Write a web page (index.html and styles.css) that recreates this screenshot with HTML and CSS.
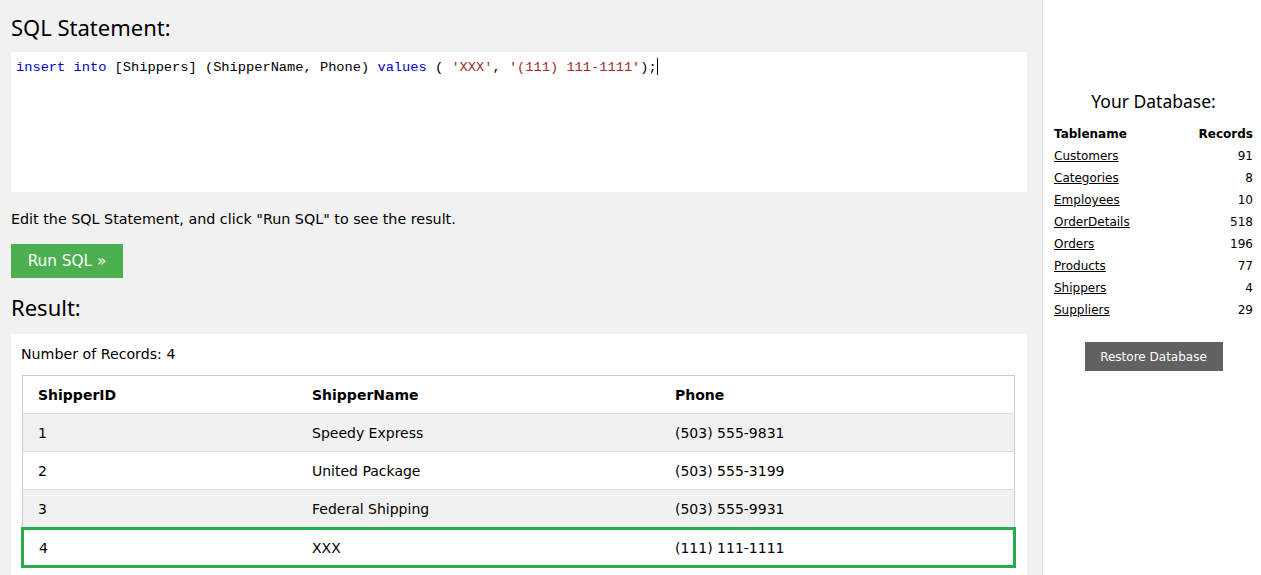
FILE: index.html
```html
<!DOCTYPE html>
<html>
<head>
<meta charset="utf-8">
<title>SQL Tryit</title>
<link rel="stylesheet" href="styles.css">
</head>
<body>
<div class="page">
  <main class="main">
    <h2 class="heading">SQL Statement:</h2>
    <div class="code"><span class="kw">insert</span> <span class="kw">into</span> [Shippers] (ShipperName, Phone) <span class="kw">values</span> ( <span class="str">'XXX'</span>, <span class="str">'(111) 111-1111'</span>);<span class="caret"></span></div>
    <p class="hint">Edit the SQL Statement, and click "Run SQL" to see the result.</p>
    <button class="run">Run SQL »</button>
    <h2 class="heading result-heading">Result:</h2>
    <div class="result">
      <div class="count">Number of Records: 4</div>
      <table class="grid">
        <thead>
          <tr><th class="c1">ShipperID</th><th class="c2">ShipperName</th><th>Phone</th></tr>
        </thead>
        <tbody>
          <tr class="alt"><td>1</td><td>Speedy Express</td><td>(503) 555-9831</td></tr>
          <tr><td>2</td><td>United Package</td><td>(503) 555-3199</td></tr>
          <tr class="alt"><td>3</td><td>Federal Shipping</td><td>(503) 555-9931</td></tr>
          <tr class="new"><td>4</td><td>XXX</td><td>(111) 111-1111</td></tr>
        </tbody>
      </table>
    </div>
  </main>
  <aside class="side">
    <h3 class="side-title">Your Database:</h3>
    <table class="db">
      <thead><tr><th class="tn">Tablename</th><th class="rc">Records</th></tr></thead>
      <tbody>
        <tr><td><a href="#">Customers</a></td><td class="rc">91</td></tr>
        <tr><td><a href="#">Categories</a></td><td class="rc">8</td></tr>
        <tr><td><a href="#">Employees</a></td><td class="rc">10</td></tr>
        <tr><td><a href="#">OrderDetails</a></td><td class="rc">518</td></tr>
        <tr><td><a href="#">Orders</a></td><td class="rc">196</td></tr>
        <tr><td><a href="#">Products</a></td><td class="rc">77</td></tr>
        <tr><td><a href="#">Shippers</a></td><td class="rc">4</td></tr>
        <tr><td><a href="#">Suppliers</a></td><td class="rc">29</td></tr>
      </tbody>
    </table>
    <div class="restore-wrap"><button class="restore">Restore Database</button></div>
  </aside>
</div>
</body>
</html>
```
FILE: styles.css
```css
html, body {
  margin: 0;
  padding: 0;
  height: 100%;
  overflow: hidden;
}
body {
  font-family: "DejaVu Sans", Verdana, sans-serif;
  color: #000;
  background: #fff;
}
.page {
  display: flex;
  height: 575px;
}
.main {
  width: 1016px;
  flex: none;
  display: flex;
  flex-direction: column;
  background: #f1f1f1;
  padding: 0 15px 0 11px;
  border-right: 1px solid #e2e2e2;
  overflow: hidden;
}
.heading {
  font-family: "Noto Sans", "Open Sans", sans-serif;
  font-weight: 400;
  font-size: 22px;
  line-height: 30px;
  margin: 12px 0 10px 0;
  color: #000;
}
.code {
  flex: none;
  background: #fff;
  height: 140px;
  box-sizing: border-box;
  padding: 6px 5px;
  font-family: "Liberation Mono", "DejaVu Sans Mono", monospace;
  font-size: 13.7px;
  line-height: 18px;
  color: #000;
  white-space: pre;
}
.kw { color: #0000cd; }
.str { color: #a52a2a; }
.caret {
  display: inline-block;
  width: 1px;
  height: 17px;
  background: #000;
  vertical-align: -4px;
}
.hint {
  font-size: 14.3px;
  line-height: 20px;
  margin: 17px 0 15px 0;
}
.run {
  display: block;
  flex: none;
  background: #4caf50;
  color: #fff;
  border: none;
  font-family: "DejaVu Sans", Verdana, sans-serif;
  font-size: 15.3px;
  height: 34px;
  width: 112px;
  padding: 0;
  margin: 0;
}
.result-heading {
  margin: 14px 0 12px 0;
}
.result {
  flex: 1;
  min-height: 0;
  background: #fff;
  padding: 10px 11px 0 10px;
}
.count {
  font-size: 14.2px;
  line-height: 20px;
  margin-bottom: 11px;
}
.grid {
  width: 995px;
  border-collapse: collapse;
  border: 1px solid #ccc;
  font-size: 14px;
}
.grid th, .grid td {
  text-align: left;
  padding: 0 16px 0 15px;
  height: 37px;
  border-bottom: 1px solid #ddd;
}
.grid th { font-weight: bold; }
.grid .c1 { width: 243px; }
.grid .c2 { width: 332px; }
.grid tr.alt td { background: #f1f1f1; }
.grid tr.new td {
  border-top: 3px solid #2bab4f;
  border-bottom: 3px solid #2bab4f;
  height: 35px;
}
.grid tr.new td:first-child { border-left: 3px solid #2bab4f; }
.grid tr.new td:last-child { border-right: 3px solid #2bab4f; }
.side {
  flex: 1;
  padding: 0 8px 0 11px;
}
.side-title {
  font-family: "Noto Sans", "Open Sans", sans-serif;
  font-weight: 400;
  font-size: 17.5px;
  text-align: center;
  margin: 89px 0 10px 0;
  line-height: 24px;
  color: #000;
}
.db {
  width: 100%;
  border-collapse: collapse;
  font-size: 12px;
}
.db th, .db td {
  height: 22px;
  padding: 0;
  text-align: left;
}
.db .rc { text-align: right; }
.db a { color: #000; text-decoration: underline; }
.restore-wrap {
  display: flex;
  justify-content: center;
  margin-top: 21px;
}
.restore {
  background: #616161;
  color: #fff;
  border: none;
  font-family: "DejaVu Sans", Verdana, sans-serif;
  font-size: 12px;
  height: 29px;
  width: 138px;
  padding: 0;
}
```
